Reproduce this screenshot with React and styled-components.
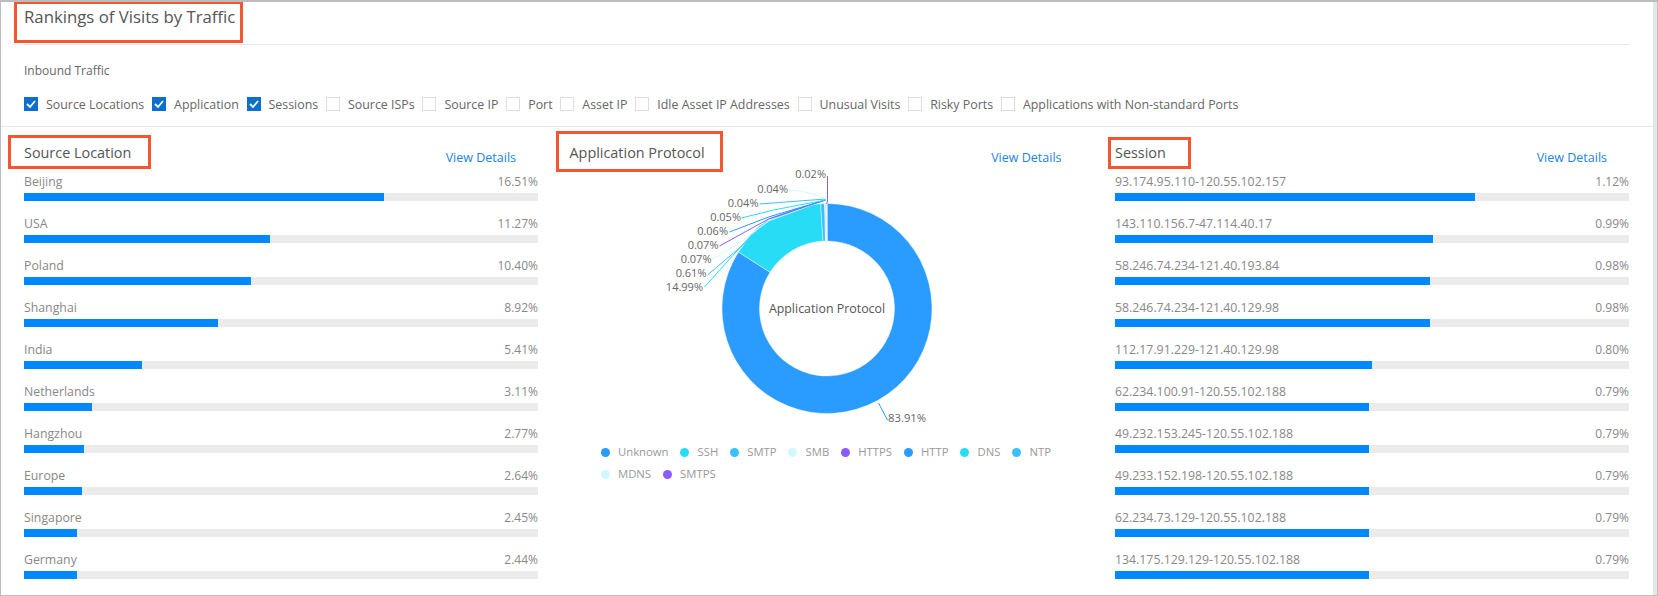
import React from 'react';
import styled, { createGlobalStyle } from 'styled-components';

const GlobalStyle = createGlobalStyle`
  html, body {
    margin: 0;
    padding: 0;
    background: #fff;
  }
  body {
    font-family: "Open Sans", "Liberation Sans", sans-serif;
    font-size: 12px;
  }
`;

const Page = styled.div`
  width: 1658px;
  height: 596px;
  box-sizing: border-box;
  border: 1px solid #bdbdbd;
  border-top-width: 2px;
  display: flex;
  overflow: hidden;
  background: #fff;
`;

const Content = styled.main`
  flex: 1;
  min-width: 0;
`;

const ScrollTrack = styled.div`
  width: 4px;
  background: #e6e6e6;
`;

const TitleBar = styled.div`
  position: relative;
  height: 42px;
  margin: 0 23px;
  width: 1605px;
  border-bottom: 1px solid #e8e8e8;
`;

const PageTitle = styled.h1`
  margin: 0;
  font-size: 16.75px;
  font-weight: 400;
  line-height: 30px;
  color: #555;
`;

const Annot = styled.div`
  position: absolute;
  left: ${p => p.$left}px;
  top: ${p => p.$top}px;
  width: ${p => p.$width}px;
  height: ${p => p.$height}px;
  box-sizing: border-box;
  border: 3px solid #f4562f;
  pointer-events: none;
`;

const Filters = styled.section`
  height: 81px;
  padding: 0 23px;
  border-bottom: 1px solid #e8e8e8;
`;

const FilterTitle = styled.div`
  padding-top: 17px;
  line-height: 18px;
  color: #666;
`;

const CheckRow = styled.div`
  display: flex;
  align-items: center;
  gap: 7.8px;
  margin-top: 15px;
  height: 18px;
`;

const CheckItem = styled.label`
  display: flex;
  align-items: center;
  gap: 8px;
  font-size: 12.4px;
  color: #666;
  white-space: nowrap;
`;

const Box = styled.span`
  width: 14px;
  height: 14px;
  box-sizing: border-box;
  display: flex;
  align-items: center;
  justify-content: center;
  background: ${p => (p.$checked ? '#0a70cc' : '#fff')};
  border: 1px solid ${p => (p.$checked ? '#0a70cc' : '#dedede')};
`;

const Columns = styled.div`
  display: grid;
  grid-template-columns: repeat(3, 514px);
  column-gap: 31.5px;
  padding-left: 23px;
`;

const ColHeader = styled.div`
  position: relative;
  height: 46px;
  box-sizing: border-box;
  padding-top: 15px;
  display: flex;
  justify-content: space-between;
  align-items: flex-start;
`;

const ColTitle = styled.h2`
  margin: 0;
  font-size: 14.4px;
  font-weight: 400;
  line-height: 22px;
  color: #555;
`;

const DetailLink = styled.a`
  margin: 7px 22px 0 0;
  font-size: 12.5px;
  line-height: 18px;
  color: #1a84e0;
  cursor: pointer;
`;

const Row = styled.div`
  margin-bottom: 14px;
`;

const RowText = styled.div`
  display: flex;
  justify-content: space-between;
  font-size: 12.3px;
  line-height: 18px;
  color: #888;
`;

const RowValue = styled.span`
  font-size: 12px;
`;

const Track = styled.div`
  height: 8px;
  margin-top: 2px;
  background: #ebebeb;
`;

const Fill = styled.div`
  height: 100%;
  background: #0088ff;
`;

const Chart = styled.svg`
  display: block;
  width: 514px;
  height: 280px;
  margin-top: -12px;
`;

const Legend = styled.div`
  display: flex;
  flex-wrap: wrap;
  width: 470px;
  padding-left: 31px;
  column-gap: 11.5px;
  font-size: 11.3px;
  color: #999;
`;

const LegendItem = styled.div`
  display: flex;
  align-items: center;
  gap: 8.5px;
  line-height: 22px;
`;

const Dot = styled.span`
  width: 9px;
  height: 9px;
  border-radius: 50%;
  background: ${p => p.$color};
`;

const BLUE = '#2a9bff';
const CYAN = '#28dcf5';
const SKY = '#3bc0ff';
const PALE = '#d2f8ff';
const PURPLE = '#8b5cff';

const filters = [
  ['Source Locations', true],
  ['Application', true],
  ['Sessions', true],
  ['Source ISPs'],
  ['Source IP'],
  ['Port'],
  ['Asset IP'],
  ['Idle Asset IP Addresses'],
  ['Unusual Visits'],
  ['Risky Ports'],
  ['Applications with Non-standard Ports'],
];

const locations = [
  ['Beijing', 16.51],
  ['USA', 11.27],
  ['Poland', 10.4],
  ['Shanghai', 8.92],
  ['India', 5.41],
  ['Netherlands', 3.11],
  ['Hangzhou', 2.77],
  ['Europe', 2.64],
  ['Singapore', 2.45],
  ['Germany', 2.44],
];

const sessions = [
  ['93.174.95.110-120.55.102.157', 1.12],
  ['143.110.156.7-47.114.40.17', 0.99],
  ['58.246.74.234-121.40.193.84', 0.98],
  ['58.246.74.234-121.40.129.98', 0.98],
  ['112.17.91.229-121.40.129.98', 0.8],
  ['62.234.100.91-120.55.102.188', 0.79],
  ['49.232.153.245-120.55.102.188', 0.79],
  ['49.233.152.198-120.55.102.188', 0.79],
  ['62.234.73.129-120.55.102.188', 0.79],
  ['134.175.129.129-120.55.102.188', 0.79],
];

const protocols = [
  ['Unknown', 83.91, BLUE],
  ['SSH', 14.99, CYAN],
  ['SMTP', 0.61, SKY],
  ['SMB', 0.07, PALE],
  ['HTTPS', 0.07, PURPLE],
  ['HTTP', 0.06, BLUE],
  ['DNS', 0.05, CYAN],
  ['NTP', 0.04, SKY],
  ['MDNS', 0.04, PALE],
  ['SMTPS', 0.02, PURPLE],
];

// leader lines, label side first
const leaders = [
  ['14.99%', CYAN, 702.5, 287, 'M704 287 L758 227 L772 219'],
  ['0.61%', SKY, 706, 273, 'M707 275 L740 247 L768 219 L825 200'],
  ['0.07%', PALE, 711, 259, 'M712 259 L740 242 L768 221 L825 200'],
  ['0.07%', PURPLE, 718, 245, 'M719 246 L768 219 L825 200'],
  ['0.06%', BLUE, 727.5, 231, 'M729 232 L768 217 L825 200'],
  ['0.05%', CYAN, 740.5, 217, 'M741 218 L773 210 L825 200'],
  ['0.04%', SKY, 758, 203, 'M759 204 L825 199'],
  ['0.04%', PALE, 787.5, 189, 'M788 190 Q810 191 825 199'],
  ['0.02%', PURPLE, 825.5, 174, 'M827 176 L827 201 L826 204'],
];

const CX = 826.5;
const CY = 308.5;
const OUTER = 105;
const INNER = 67.5;

function polar(r, deg) {
  const a = (deg * Math.PI) / 180;
  return [CX + r * Math.sin(a), CY - r * Math.cos(a)];
}

function slicePath(start, end) {
  const large = end - start > 180 ? 1 : 0;
  const [x1, y1] = polar(OUTER, start);
  const [x2, y2] = polar(OUTER, end);
  const [x3, y3] = polar(INNER, end);
  const [x4, y4] = polar(INNER, start);
  return `M${x1} ${y1} A${OUTER} ${OUTER} 0 ${large} 1 ${x2} ${y2} L${x3} ${y3} A${INNER} ${INNER} 0 ${large} 0 ${x4} ${y4} Z`;
}

function Donut() {
  const total = protocols.reduce((sum, p) => sum + p[1], 0);
  let angle = 0;
  const slices = protocols.map(([name, value, color]) => {
    const start = angle;
    angle += (value / total) * 360;
    return <path key={name} d={slicePath(start, angle)} fill={color} stroke="#fff" strokeWidth="0.4" />;
  });

  return (
    <Chart viewBox="569.5 161 514 280" fontFamily="'Open Sans', sans-serif" fontSize="11">
      {slices}
      {leaders.map(([label, color, x, y, d]) => (
        <g key={label + y}>
          <path d={d} fill="none" stroke={color} strokeWidth="1" />
          <text x={x} y={y + 4} textAnchor="end" fill="#666">{label}</text>
        </g>
      ))}
      <path d="M878 403 L887 420" fill="none" stroke={BLUE} strokeWidth="1" />
      <text x="887.5" y="422" fontSize="11.3" fill="#666">83.91%</text>
      <text x={CX} y={CY + 4} textAnchor="middle" fontSize="12.4" fill="#555">Application Protocol</text>
    </Chart>
  );
}

function RankList({ items }) {
  const max = items[0][1];
  return items.map(([name, value]) => (
    <Row key={name}>
      <RowText>
        <span>{name}</span>
        <RowValue>{value.toFixed(2)}%</RowValue>
      </RowText>
      <Track>
        <Fill style={{ width: `${(value / max) * 70}%` }} />
      </Track>
    </Row>
  ));
}

export default function App() {
  return (
    <>
      <GlobalStyle />
      <Page>
        <Content>
          <TitleBar>
            <PageTitle>Rankings of Visits by Traffic</PageTitle>
            <Annot $left={-10} $top={-1} $width={229} $height={42} />
          </TitleBar>
          <Filters>
            <FilterTitle>Inbound Traffic</FilterTitle>
            <CheckRow>
              {filters.map(([label, checked]) => (
                <CheckItem key={label}>
                  <Box $checked={checked}>
                    {checked && (
                      <svg width="12" height="12" viewBox="0 0 12 12">
                        <path d="M2 6 L5 9 L10 3" fill="none" stroke="#fff" strokeWidth="1.8" />
                      </svg>
                    )}
                  </Box>
                  {label}
                </CheckItem>
              ))}
            </CheckRow>
          </Filters>
          <Columns>
            <div>
              <ColHeader>
                <ColTitle>Source Location</ColTitle>
                <DetailLink>View Details</DetailLink>
                <Annot $left={-16} $top={8} $width={143} $height={34} />
              </ColHeader>
              <RankList items={locations} />
            </div>
            <div>
              <ColHeader>
                <ColTitle>Application Protocol</ColTitle>
                <DetailLink>View Details</DetailLink>
                <Annot $left={-14} $top={4} $width={167} $height={41} />
              </ColHeader>
              <Donut />
              <Legend>
                {protocols.map(([name, , color]) => (
                  <LegendItem key={name}>
                    <Dot $color={color} />
                    {name}
                  </LegendItem>
                ))}
              </Legend>
            </div>
            <div>
              <ColHeader>
                <ColTitle>Session</ColTitle>
                <DetailLink>View Details</DetailLink>
                <Annot $left={-7} $top={10} $width={83} $height={32} />
              </ColHeader>
              <RankList items={sessions} />
            </div>
          </Columns>
        </Content>
        <ScrollTrack />
      </Page>
    </>
  );
}
